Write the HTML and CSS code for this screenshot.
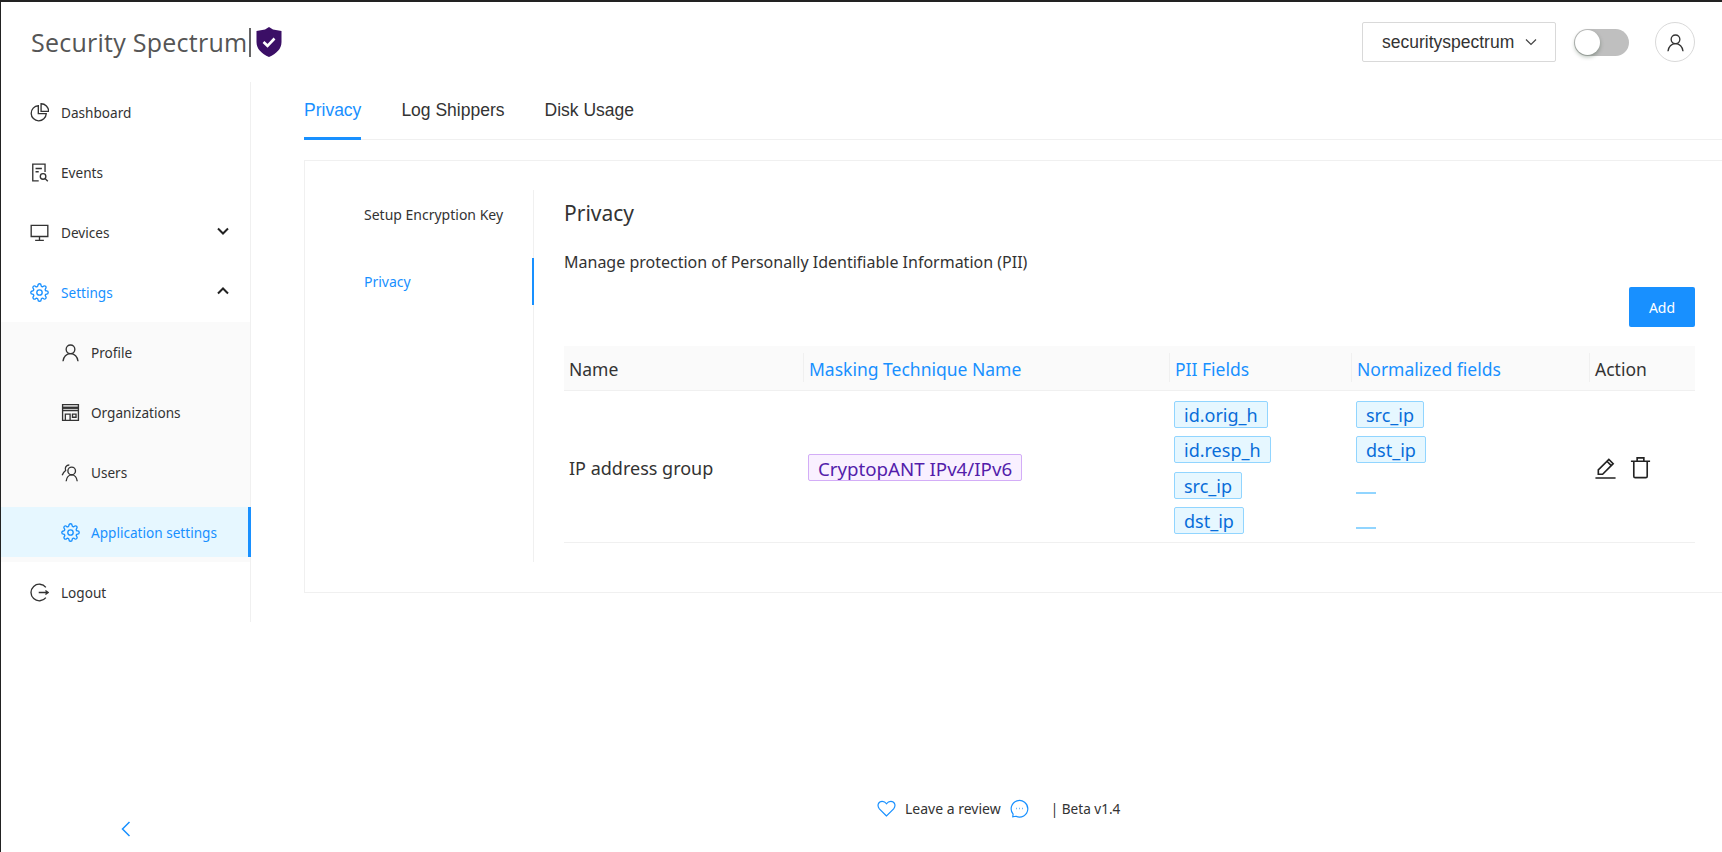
FILE: index.html
```html
<!DOCTYPE html>
<html lang="en">
<head>
  <meta charset="UTF-8" />
  <title>Security Spectrum | Privacy</title>
  <link rel="stylesheet" href="styles.css">
</head>
<body>

<svg class="sprite" width="0" height="0">
  <symbol id="i-gear" viewBox="0 0 24 24">
    <circle cx="12" cy="12" r="3.4"/>
    <path d="M19.4 15a1.65 1.65 0 0 0 .33 1.82l.06.06a2 2 0 0 1 0 2.83 2 2 0 0 1-2.83 0l-.06-.06a1.65 1.65 0 0 0-1.82-.33 1.65 1.65 0 0 0-1 1.51V21a2 2 0 0 1-2 2 2 2 0 0 1-2-2v-.09A1.65 1.65 0 0 0 9 19.4a1.65 1.65 0 0 0-1.82.33l-.06.06a2 2 0 0 1-2.83 0 2 2 0 0 1 0-2.83l.06-.06a1.65 1.65 0 0 0 .33-1.82 1.65 1.65 0 0 0-1.51-1H3a2 2 0 0 1-2-2 2 2 0 0 1 2-2h.09A1.65 1.65 0 0 0 4.6 9a1.65 1.65 0 0 0-.33-1.82l-.06-.06a2 2 0 0 1 0-2.83 2 2 0 0 1 2.83 0l.06.06a1.65 1.65 0 0 0 1.82.33H9a1.65 1.65 0 0 0 1-1.51V3a2 2 0 0 1 2-2 2 2 0 0 1 2 2v.09a1.65 1.65 0 0 0 1 1.51 1.65 1.65 0 0 0 1.82-.33l.06-.06a2 2 0 0 1 2.83 0 2 2 0 0 1 0 2.83l-.06.06a1.65 1.65 0 0 0-.33 1.82V9a1.65 1.65 0 0 0 1.51 1H21a2 2 0 0 1 2 2 2 2 0 0 1-2 2h-.09a1.65 1.65 0 0 0-1.51 1z"/>
  </symbol>
  <symbol id="i-user" viewBox="0 0 24 24">
    <circle cx="12" cy="8" r="5.5"/>
    <path d="M2.500 23c.5-5.500 4.500-9.500 9.500-9.500s9 4 9.500 9.500"/>
  </symbol>
</svg>

<header class="topbar">
  <div class="logo">
    <span class="logo-text">Security Spectrum</span>
    <span class="logo-bar"></span>
    <svg class="logo-shield" viewBox="0 0 26 30">
      <path d="M13 0l4 2.600 8.500 1.400v11c0 7-5 11.500-12.500 15C5.500 26.500.5 22 .5 15V4L9 2.600z" fill="#3b0f66"/>
      <path d="M7.500 15l4 3.800 7-7.300" fill="none" stroke="#fff" stroke-width="2.600"/>
    </svg>
  </div>
  <div class="topbar-right">
    <div class="org-select">
      <span>securityspectrum</span>
      <svg class="org-caret" viewBox="0 0 12 8"><path d="M1 1.500l5 5 5-5"/></svg>
    </div>
    <div class="switch"><span class="switch-knob"></span></div>
    <div class="avatar"><svg class="icon"><use href="#i-user"/></svg></div>
  </div>
</header>

<div class="layout">
  <aside class="sidebar">
    <nav class="menu">
      <a class="menu-item">
        <svg class="icon" viewBox="0 0 24 24"><path d="M10.500 3.500a9.500 9.500 0 1 0 10 10h-10z"/><path d="M14 1v9.500h9.500A9.500 9.500 0 0 0 14 1z"/></svg>
        <span>Dashboard</span>
      </a>
      <a class="menu-item">
        <svg class="icon" viewBox="0 0 24 24"><path d="M11 22.500H3.500V1.500h15.500v10"/><path d="M7 7h8M7 11h4"/><circle cx="16.500" cy="17" r="3.500"/><path d="M19 19.500l3.500 3.500"/></svg>
        <span>Events</span>
      </a>
      <a class="menu-item">
        <svg class="icon" viewBox="0 0 24 24"><path d="M1.500 3h21v14h-21zM12 17v5M6.500 22h11"/></svg>
        <span>Devices</span>
        <svg class="menu-caret" viewBox="0 0 12 8"><path d="M1 1.500l5 5 5-5"/></svg>
      </a>
      <a class="menu-item is-active">
        <svg class="icon"><use href="#i-gear"/></svg>
        <span>Settings</span>
        <svg class="menu-caret" viewBox="0 0 12 8"><path d="M1 6.500l5-5 5 5"/></svg>
      </a>
      <div class="submenu">
        <a class="menu-item sub-item">
          <svg class="icon"><use href="#i-user"/></svg>
          <span>Profile</span>
        </a>
        <a class="menu-item sub-item">
          <svg class="icon" viewBox="0 0 24 24"><path d="M2 2h20v20H2zM2 9.500h20M5.500 22v-8h6v8M14.500 14h4.500v4h-4.500z"/><path d="M2 6h20" stroke-width="3"/></svg>
          <span>Organizations</span>
        </a>
        <a class="menu-item sub-item">
          <svg class="icon" viewBox="0 0 24 24"><circle cx="13.500" cy="10" r="4.800"/><path d="M6.500 23c.5-4.500 3.300-8 7-8s6.500 3.500 7 8"/><path d="M10.500 2.500A5 5 0 0 0 5.800 9.500C3.700 11 2.300 13 1.500 15.500"/></svg>
          <span>Users</span>
        </a>
        <a class="menu-item sub-item is-selected">
          <svg class="icon"><use href="#i-gear"/></svg>
          <span>Application settings</span>
        </a>
      </div>
      <a class="menu-item">
        <svg class="icon" viewBox="0 0 24 24"><path d="M20 5.500A10.500 10.500 0 1 0 20 18.500"/><path d="M11 12h12M19.500 9.500l3.500 2.500-3.500 2.500" /></svg>
        <span>Logout</span>
      </a>
    </nav>
    <div class="collapse">
      <svg viewBox="0 0 10 16"><path d="M8.500 1L1.500 8l7 7"/></svg>
    </div>
  </aside>

  <main class="main">
    <div class="tabs">
      <a class="tab is-active">Privacy</a>
      <a class="tab">Log Shippers</a>
      <a class="tab">Disk Usage</a>
    </div>

    <section class="card">
      <div class="side-tabs">
        <a class="side-tab">Setup Encryption Key</a>
        <a class="side-tab is-active">Privacy</a>
      </div>
      <div class="panel">
        <h2>Privacy</h2>
        <p class="panel-desc">Manage protection of Personally Identifiable Information (PII)</p>
        <div class="panel-actions"><button class="button">Add</button></div>
        <table class="pii-table">
          <colgroup>
            <col class="col-name"><col class="col-mask"><col class="col-pii"><col class="col-norm"><col class="col-action">
          </colgroup>
          <thead>
            <tr>
              <th><span class="th-cell">Name</span></th>
              <th><span class="th-cell th-sort">Masking Technique Name</span></th>
              <th><span class="th-cell th-sort">PII Fields</span></th>
              <th><span class="th-cell th-sort">Normalized fields</span></th>
              <th><span class="th-cell">Action</span></th>
            </tr>
          </thead>
          <tbody>
            <tr>
              <td>IP address group</td>
              <td><span class="tag tag-purple">CryptopANT IPv4/IPv6</span></td>
              <td>
                <div class="tag-list">
                  <span class="tag">id.orig_h</span>
                  <span class="tag">id.resp_h</span>
                  <span class="tag">src_ip</span>
                  <span class="tag">dst_ip</span>
                </div>
              </td>
              <td>
                <div class="tag-list">
                  <span class="tag">src_ip</span>
                  <span class="tag">dst_ip</span>
                  <span class="tag-empty"></span>
                  <span class="tag-empty"></span>
                </div>
              </td>
              <td>
                <div class="row-actions">
                  <svg class="icon-action" viewBox="0 0 24 24"><path d="M1.500 23h21M4.500 19v-4.500L15.500 3.500l4.500 4.500L9 19z"/><path d="M13.500 5.500l4.500 4.500"/></svg>
                  <svg class="icon-action" viewBox="0 0 24 24"><path d="M2 5.500h20M8.500 5.500V2h7v3.500M5 5.500V21a1.500 1.500 0 0 0 1.500 1.500h11A1.500 1.500 0 0 0 19 21V5.500"/></svg>
                </div>
              </td>
            </tr>
          </tbody>
        </table>
      </div>
    </section>

    <footer class="footer">
      <svg class="foot-icon" viewBox="0 0 24 24"><path d="M12 21.500L3 12.500C-.5 8 2 3 6.500 3c2.500 0 4.300 1.200 5.500 3 1.200-1.800 3-3 5.500-3C22 3 24.500 8 21 12.500z"/></svg>
      <span class="foot-review">Leave a review</span>
      <svg class="foot-icon" viewBox="0 0 24 24"><path d="M3.500 22.500l.4-3.500A10.500 10.500 0 1 1 7.500 21.800z"/><path d="M8 12h.8M11.600 12h.8M15.200 12h.8" stroke-width="2"/></svg>
      <span class="foot-beta">| Beta v1.4</span>
    </footer>
  </main>
</div>

</body>
</html>
```

FILE: styles.css
```css
* {
  box-sizing: border-box;
}
html, body {
  height: 100%;
}
body {
  margin: 0;
  font-family: 'Noto Sans', sans-serif;
  font-size: 14px;
  color: #333;
  background: #fff;
  border-top: 2px solid #222;
  border-left: 1px solid #222;
  overflow: hidden;
  display: flex;
  flex-direction: column;
}
.sprite {
  position: absolute;
}
.icon {
  width: 19px;
  height: 19px;
  fill: none;
  stroke: currentColor;
  stroke-width: 1.700;
  flex-shrink: 0;
}

/* Шапка */
.topbar {
  height: 80px;
  flex-shrink: 0;
  display: flex;
  align-items: center;
  justify-content: space-between;
  padding: 0 27px 0 30px;
}
.logo {
  display: flex;
  align-items: center;
}
.logo-text {
  font-family: 'Open Sans', sans-serif;
  font-size: 25px;
  letter-spacing: 0.250px;
  color: #555;
}
.logo-bar {
  width: 2px;
  height: 29px;
  margin: 0 5px 0 2px;
  background: #666;
}
.logo-shield {
  width: 26px;
  height: 30px;
}
.topbar-right {
  display: flex;
  align-items: center;
}
.org-select {
  width: 194px;
  height: 40px;
  border: 1px solid #d9d9d9;
  border-radius: 2px;
  display: flex;
  align-items: center;
  gap: 11px;
  padding-left: 19px;
  font-family: 'Liberation Sans', sans-serif;
  font-size: 17.500px;
  color: #333;
}
.org-caret {
  width: 12px;
  height: 8px;
  fill: none;
  stroke: #444;
  stroke-width: 1.200;
}
.switch {
  width: 55px;
  height: 27px;
  margin-left: 18px;
  background: #bfbfbf;
  border-radius: 14px;
  padding: 1px;
}
.switch-knob {
  display: block;
  width: 25px;
  height: 25px;
  border-radius: 50%;
  background: #fff;
  box-shadow: 0 2px 4px rgba(0, 35, 11, 0.3);
}
.avatar {
  width: 40px;
  height: 40px;
  margin-left: 26px;
  border: 1px solid #d9d9d9;
  border-radius: 50%;
  display: flex;
  align-items: center;
  justify-content: center;
}

.layout {
  flex: 1;
  display: flex;
  min-height: 0;
}

/* Боковое меню */
.sidebar {
  width: 250px;
  flex-shrink: 0;
  display: flex;
  flex-direction: column;
}
.menu {
  height: 540px;
  border-right: 1px solid #f0f0f0;
  padding-top: 5px;
}
.menu-item {
  height: 50px;
  margin-bottom: 10px;
  padding: 0 21px 0 29px;
  display: flex;
  align-items: center;
  gap: 12px;
  color: #333;
  font-size: 13.600px;
  white-space: nowrap;
}
.menu-item span {
  flex: 1;
}
.menu-item.is-active {
  color: #1890ff;
}
.menu-caret {
  width: 12px;
  height: 8px;
  margin-top: -3px;
  fill: none;
  stroke: #222;
  stroke-width: 2;
}
.submenu {
  background: #fafafa;
  height: 240px;
  margin-bottom: 5px;
  margin-top: -5px;
  padding-top: 5px;
}
.sub-item {
  padding-left: 60px;
  gap: 11px;
}
.sub-item:last-child {
  margin-bottom: 0;
}
.is-selected {
  color: #1890ff;
  background: #e6f7ff;
  border-right: 3px solid #1890ff;
  margin-right: -1px;
}
.collapse {
  margin-top: auto;
  height: 31px;
  display: flex;
  justify-content: center;
}
.collapse svg {
  width: 12px;
  height: 16px;
  fill: none;
  stroke: #1890ff;
  stroke-width: 1.500;
}

/* Контент */
.main {
  flex: 1;
  min-width: 0;
  display: flex;
  flex-direction: column;
  padding-left: 53px;
}
.tabs {
  display: flex;
  gap: 40px;
  height: 58px;
  border-bottom: 1px solid #f0f0f0;
  font-family: 'Liberation Sans', sans-serif;
  font-size: 17.500px;
}
.tab {
  height: 58px;
  padding-top: 16px;
  line-height: 24px;
  color: #333;
}
.tab.is-active {
  color: #1890ff;
  border-bottom: 3px solid #1890ff;
}
.card {
  width: 1500px;
  height: 433px;
  margin-top: 20px;
  border: 1px solid #f0f0f0;
  padding: 29px 0 30px 0;
  display: flex;
}
.side-tabs {
  width: 229px;
  flex-shrink: 0;
  border-right: 1px solid #f0f0f0;
  padding-top: 1px;
}
.side-tab {
  display: block;
  height: 47px;
  line-height: 47px;
  margin-bottom: 20px;
  padding-left: 59px;
  color: #333;
}
.side-tab.is-active {
  color: #1890ff;
  border-right: 2px solid #1890ff;
  margin-right: -1px;
}
.panel {
  width: 1131px;
  margin-left: 30px;
}
.panel h2 {
  margin: 7px 0 0;
  font-size: 21px;
  font-weight: 400;
  line-height: 32px;
  color: #333;
}
.panel-desc {
  margin: 21px 0 0;
  font-size: 16px;
  line-height: 24px;
}
.panel-actions {
  display: flex;
  justify-content: flex-end;
  margin-top: 13px;
}
.button {
  width: 66px;
  height: 40px;
  background: #1890ff;
  color: #fff;
  border: none;
  border-radius: 2px;
  font: inherit;
}

.pii-table {
  width: 100%;
  margin-top: 19px;
  border-collapse: collapse;
  table-layout: fixed;
  font-size: 18px;
}
.col-name { width: 239px; }
.col-mask { width: 366px; }
.col-pii { width: 182px; }
.col-norm { width: 238px; }
.pii-table th {
  height: 44px;
  padding: 0;
  background: #fafafa;
  border-bottom: 1px solid #f0f0f0;
  font-size: 17.500px;
  font-weight: 400;
  text-align: left;
}
.th-cell {
  display: block;
  height: 29px;
  line-height: 32px;
  padding-left: 5px;
}
th + th .th-cell {
  border-left: 1px solid #f0f0f0;
}
.th-sort {
  color: #1890ff;
}
.pii-table td {
  height: 152px;
  padding: 3px 5px 0;
  border-bottom: 1px solid #f0f0f0;
}
.tag {
  display: inline-block;
  height: 27px;
  line-height: 27px;
  padding: 0 9px;
  background: #e6f7ff;
  border: 1px solid #91d5ff;
  border-radius: 2px;
  color: #096dd9;
}
.tag-purple {
  background: #f9f0ff;
  border-color: #d3adf7;
  color: #531dab;
  font-size: 18.700px;
}
.tag-list {
  display: flex;
  flex-direction: column;
  align-items: flex-start;
  gap: 8.500px;
}
.tag-empty {
  display: block;
  width: 20px;
  height: 22px;
  margin-bottom: 5px;
  border-bottom: 2px solid #91d5ff;
}
.row-actions {
  display: flex;
  gap: 12px;
  align-items: center;
}
.icon-action {
  width: 23px;
  height: 23px;
  fill: none;
  stroke: #222;
  stroke-width: 1.700;
}

.footer {
  margin-top: auto;
  margin-left: -53px;
  height: 53px;
  display: flex;
  align-items: flex-start;
  padding-left: 626px;
}
.foot-icon {
  width: 19px;
  height: 19px;
  fill: none;
  stroke: #1890ff;
  stroke-width: 1.500;
}
.foot-review {
  margin: 0 9px 0 9px;
}
.foot-beta {
  margin-left: 22px;
  font-size: 13.600px;
}
```
